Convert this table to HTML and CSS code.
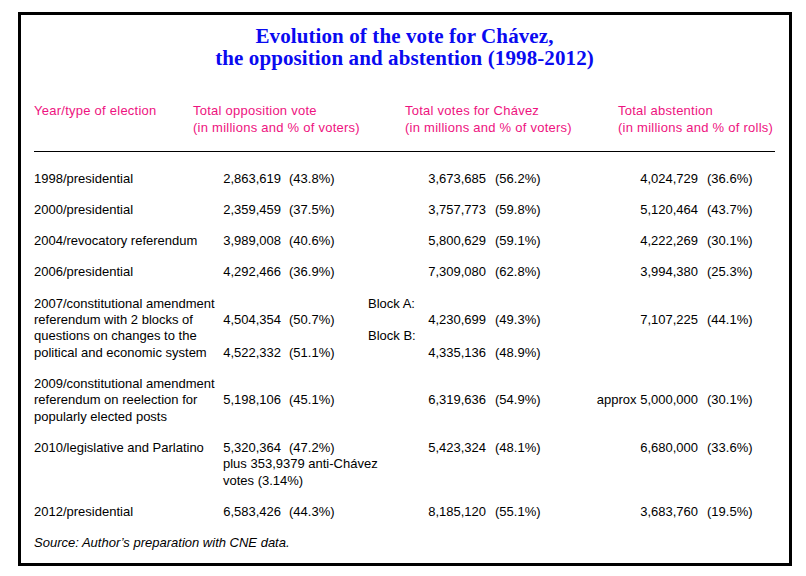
FILE: index.html
```html
<!DOCTYPE html>
<html lang="en">
<head>
<meta charset="utf-8">
<title>Evolution of the vote for Chávez</title>
<link rel="stylesheet" href="styles.css">
</head>
<body>
<div class="frame">
  <h1 class="title">Evolution of the vote for Chávez,<br>the opposition and abstention (1998-2012)</h1>

  <div class="grid head">
    <div>Year/type of election</div>
    <div>Total opposition vote<br>(in millions and % of voters)</div>
    <div class="c3h">Total votes for Chávez<br>(in millions and % of voters)</div>
    <div>Total abstention<br>(in millions and % of rolls)</div>
  </div>

  <div class="rule"></div>

  <div class="grid body">
    <div>1998/presidential</div>
    <div class="val v2"><span class="num"><span>2,863,619</span></span><span class="pct">(43.8%)</span></div>
    <div class="val v3"><span class="num"><span>3,673,685</span></span><span class="pct">(56.2%)</span></div>
    <div class="val v4"><span class="num"><span>4,024,729</span></span><span class="pct">(36.6%)</span></div>

    <div>2000/presidential</div>
    <div class="val v2"><span class="num"><span>2,359,459</span></span><span class="pct">(37.5%)</span></div>
    <div class="val v3"><span class="num"><span>3,757,773</span></span><span class="pct">(59.8%)</span></div>
    <div class="val v4"><span class="num"><span>5,120,464</span></span><span class="pct">(43.7%)</span></div>

    <div>2004/revocatory referendum</div>
    <div class="val v2"><span class="num"><span>3,989,008</span></span><span class="pct">(40.6%)</span></div>
    <div class="val v3"><span class="num"><span>5,800,629</span></span><span class="pct">(59.1%)</span></div>
    <div class="val v4"><span class="num"><span>4,222,269</span></span><span class="pct">(30.1%)</span></div>

    <div>2006/presidential</div>
    <div class="val v2"><span class="num"><span>4,292,466</span></span><span class="pct">(36.9%)</span></div>
    <div class="val v3"><span class="num"><span>7,309,080</span></span><span class="pct">(62.8%)</span></div>
    <div class="val v4"><span class="num"><span>3,994,380</span></span><span class="pct">(25.3%)</span></div>

    <div>2007/constitutional amendment<br>referendum with 2 blocks of<br>questions on changes to the<br>political and economic system</div>
    <div>
      <div class="val v2 skip"><span class="num"><span>4,504,354</span></span><span class="pct">(50.7%)</span></div>
      <div class="val v2 skip"><span class="num"><span>4,522,332</span></span><span class="pct">(51.1%)</span></div>
    </div>
    <div>
      <div>Block A:</div>
      <div class="val v3"><span class="num"><span>4,230,699</span></span><span class="pct">(49.3%)</span></div>
      <div>Block B:</div>
      <div class="val v3"><span class="num"><span>4,335,136</span></span><span class="pct">(48.9%)</span></div>
    </div>
    <div class="val v4 skip"><span class="num"><span>7,107,225</span></span><span class="pct">(44.1%)</span></div>

    <div>2009/constitutional amendment<br>referendum on reelection for<br>popularly elected posts</div>
    <div class="val v2 skip"><span class="num"><span>5,198,106</span></span><span class="pct">(45.1%)</span></div>
    <div class="val v3 skip"><span class="num"><span>6,319,636</span></span><span class="pct">(54.9%)</span></div>
    <div class="val v4 skip"><span class="num"><span>approx 5,000,000</span></span><span class="pct">(30.1%)</span></div>

    <div>2010/legislative and Parlatino</div>
    <div>
      <div class="val v2"><span class="num"><span>5,320,364</span></span><span class="pct">(47.2%)</span></div>
      <div class="extra">plus 353,9379 anti-Chávez<br>votes (3.14%)</div>
    </div>
    <div class="val v3"><span class="num"><span>5,423,324</span></span><span class="pct">(48.1%)</span></div>
    <div class="val v4"><span class="num"><span>6,680,000</span></span><span class="pct">(33.6%)</span></div>

    <div>2012/presidential</div>
    <div class="val v2"><span class="num"><span>6,583,426</span></span><span class="pct">(44.3%)</span></div>
    <div class="val v3"><span class="num"><span>8,185,120</span></span><span class="pct">(55.1%)</span></div>
    <div class="val v4"><span class="num"><span>3,683,760</span></span><span class="pct">(19.5%)</span></div>

    <div class="source">Source: Author’s preparation with CNE data.</div>
  </div>
</div>
</body>
</html>
```

FILE: styles.css
```css
html, body {
  margin: 0;
  padding: 0;
  background: #ffffff;
}

.frame {
  box-sizing: border-box;
  margin: 12px 0 0 18px;
  width: 774px;
  height: 554px;
  border: 3px solid #000000;
  padding: 9.5px 14px 0 13px;
  font-family: "Liberation Sans", Arial, sans-serif;
  font-size: 13px;
  color: #000000;
}

.title {
  margin: 0;
  text-align: center;
  font-family: "Liberation Serif", "Times New Roman", serif;
  font-weight: bold;
  font-size: 21px;
  line-height: 22px;
  letter-spacing: 0.1px;
  color: #0a0af0;
}

.grid {
  display: grid;
  grid-template-columns: 159px 175px 250px 1fr;
}

.head {
  margin-top: 33px;
  line-height: 17px;
  letter-spacing: 0.25px;
  color: #ee1380;
  white-space: nowrap;
}

.c3h {
  padding-left: 37px;
}

.rule {
  margin-top: 15.5px;
  border-top: 1px solid #000000;
}

.body {
  margin-top: 18.5px;
  row-gap: 15px;
  line-height: 16.33px;
  white-space: nowrap;
}

.val {
  display: flex;
}

.num {
  display: flex;
  justify-content: flex-end;
}

.v2 .num { width: 88px; }
.v3 .num { width: 118px; }
.v4 .num { width: 80px; }

.pct {
  margin-left: 8px;
}

.v3 .pct,
.v4 .pct {
  margin-left: 9px;
}

.skip {
  margin-top: 16.33px;
}

.extra {
  padding-left: 30px;
}

.source {
  grid-column: 1 / -1;
  font-style: italic;
}
```
